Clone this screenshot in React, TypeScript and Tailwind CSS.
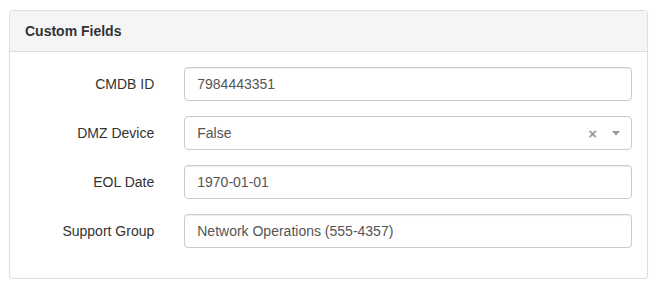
import React from "react";

function Row({ label, children }: { label: string; children: React.ReactNode }) {
  return (
    <div className="flex mb-[15px]">
      <label className="w-1/4 shrink-0 pr-[15px] pt-[7px] text-right text-[14px] leading-[20px] text-[#333]">
        {label}
      </label>
      <div className="flex-1 px-[15px]">{children}</div>
    </div>
  );
}

function Input({ value }: { value: string }) {
  return (
    <div className="h-[34px] w-full rounded-[4px] border border-[#ccc] bg-white px-[12px] py-[6px] text-[14px] leading-[20px] text-[#555] shadow-[inset_0_1px_1px_rgba(0,0,0,0.075)]">
      {value}
    </div>
  );
}

export default function App() {
  return (
    <div
      className="bg-white pl-[9px] pt-[10px]"
      style={{ fontFamily: '"Liberation Sans", Arial, Helvetica, sans-serif' }}
    >
      <div className="w-[639px] rounded-[4px] border border-[#ddd] bg-white shadow-[0_1px_1px_rgba(0,0,0,0.05)]">
        <div className="h-[41px] rounded-t-[3px] border-b border-[#ddd] bg-[#f5f5f5] px-[15px] pt-[10px] text-[14px] font-bold leading-[20px] text-[#333]">
          Custom Fields
        </div>
        <div className="pt-[15px] pb-[15px]">
          <Row label="CMDB ID">
            <Input value="7984443351" />
          </Row>
          <Row label="DMZ Device">
            <div className="relative flex h-[34px] w-full items-center rounded-[4px] border border-[#ccc] bg-white pl-[12px] pr-[10px] text-[14px] leading-[20px] text-[#555]">
              <span className="flex-1">False</span>
              <span className="mr-[15px] text-[15px] font-bold leading-none text-[#999]">×</span>
              <svg width="8" height="5" viewBox="0 0 8 5" className="mr-[1px]">
                <path d="M0 0 L8 0 L4 4.5 Z" fill="#999" />
              </svg>
            </div>
          </Row>
          <Row label="EOL Date">
            <Input value="1970-01-01" />
          </Row>
          <Row label="Support Group">
            <Input value="Network Operations (555-4357)" />
          </Row>
        </div>
      </div>
    </div>
  );
}
